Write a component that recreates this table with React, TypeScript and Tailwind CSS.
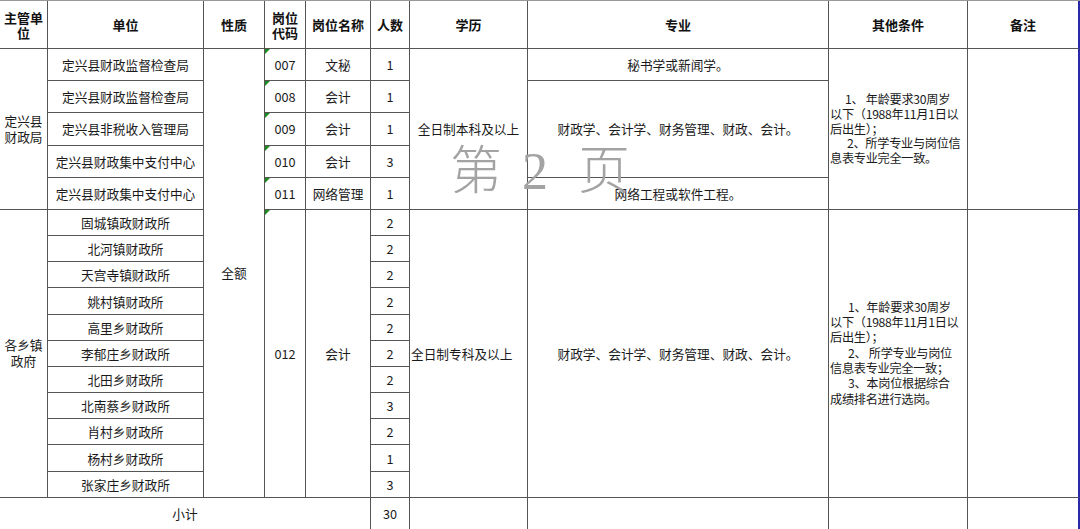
import React from "react";

interface UnitRow {
  unit: string;
  code?: string;
  name?: string;
  num: string;
}

const sectionA: UnitRow[] = [
  { unit: "定兴县财政监督检查局", code: "007", name: "文秘", num: "1" },
  { unit: "定兴县财政监督检查局", code: "008", name: "会计", num: "1" },
  { unit: "定兴县非税收入管理局", code: "009", name: "会计", num: "1" },
  { unit: "定兴县财政集中支付中心", code: "010", name: "会计", num: "3" },
  { unit: "定兴县财政集中支付中心", code: "011", name: "网络管理", num: "1" },
];

const sectionB: UnitRow[] = [
  { unit: "固城镇政财政所", num: "2" },
  { unit: "北河镇财政所", num: "2" },
  { unit: "天宫寺镇财政所", num: "2" },
  { unit: "姚村镇财政所", num: "2" },
  { unit: "高里乡财政所", num: "2" },
  { unit: "李郁庄乡财政所", num: "2" },
  { unit: "北田乡财政所", num: "2" },
  { unit: "北南蔡乡财政所", num: "3" },
  { unit: "肖村乡财政所", num: "2" },
  { unit: "杨村乡财政所", num: "1" },
  { unit: "张家庄乡财政所", num: "3" },
];

// row-start-2 .. row-start-17, written out so tailwind picks them up
const rowStart = [
  "row-start-2",
  "row-start-3",
  "row-start-4",
  "row-start-5",
  "row-start-6",
  "row-start-7",
  "row-start-8",
  "row-start-9",
  "row-start-10",
  "row-start-11",
  "row-start-12",
  "row-start-13",
  "row-start-14",
  "row-start-15",
  "row-start-16",
  "row-start-17",
];

const cell =
  "flex items-center justify-center text-center border-r border-b border-[#555] bg-white";

function Tri() {
  return (
    <span className="absolute left-0 top-0 h-0 w-0 border-t-[5px] border-r-[5px] border-t-[#1f8a1f] border-r-transparent" />
  );
}

function Head({ col, children }: { col: string; children: React.ReactNode }) {
  return (
    <div
      className={`${cell} ${col} row-start-1 font-bold text-[13px] leading-[15px] text-[#111]`}
    >
      {children}
    </div>
  );
}

export default function App() {
  return (
    <div className="relative w-[1080px] h-[529px] overflow-hidden bg-white font-['Noto_Sans_CJK_SC','Liberation_Sans',sans-serif] text-[12.7px] text-[#1a1a1a]">
      <div className="grid grid-cols-[48px_156px_61px_41px_65px_39px_118px_301px_139px_112px] grid-rows-[48px_repeat(5,32.2px)_repeat(11,26.18px)_32px] border-t border-[#999]">
        {/* header */}
        <Head col="col-start-1">
          <span>
            主管单
            <br />位
          </span>
        </Head>
        <Head col="col-start-2">单位</Head>
        <Head col="col-start-3">性质</Head>
        <Head col="col-start-4">
          <span>
            岗位
            <br />
            代码
          </span>
        </Head>
        <Head col="col-start-5">岗位名称</Head>
        <Head col="col-start-6">人数</Head>
        <Head col="col-start-7">学历</Head>
        <Head col="col-start-8">专业</Head>
        <Head col="col-start-9">其他条件</Head>
        <div
          className={`${cell} col-start-10 row-start-1 font-bold text-[13px] text-[#111] border-r-2 border-r-[#2a2aa8]`}
        >
          备注
        </div>

        {/* 定兴县财政局 */}
        <div className={`${cell} col-start-1 row-start-2 row-span-5 leading-[16px] px-[3px]`}>
          定兴县财政局
        </div>
        {sectionA.map((r, i) => (
          <React.Fragment key={r.code}>
            <div className={`${cell} col-start-2 ${rowStart[i]}`}>{r.unit}</div>
            <div className={`${cell} col-start-4 ${rowStart[i]} relative`}>
              <Tri />
              {r.code}
            </div>
            <div className={`${cell} col-start-5 ${rowStart[i]}`}>{r.name}</div>
            <div className={`${cell} col-start-6 ${rowStart[i]}`}>{r.num}</div>
          </React.Fragment>
        ))}
        <div className={`${cell} col-start-3 row-start-2 row-span-16`}>全额</div>
        <div className={`${cell} col-start-7 row-start-2 row-span-5`}>全日制本科及以上</div>
        <div className={`${cell} col-start-8 row-start-2`}>秘书学或新闻学。</div>
        <div className={`${cell} col-start-8 row-start-3 row-span-3`}>
          财政学、会计学、财务管理、财政、会计。
        </div>
        <div className={`${cell} col-start-8 row-start-6`}>网络工程或软件工程。</div>
        <div
          className={`${cell} col-start-9 row-start-2 row-span-5 flex-col !items-start !text-left whitespace-nowrap text-[12.2px] tracking-[-0.3px] leading-[14.8px] pl-[1px]`}
        >
          <div className="pl-[15px]">1、 年龄要求30周岁</div>
          <div>以下（1988年11月1日以</div>
          <div>后出生）；</div>
          <div className="pl-[17px]">2、所学专业与岗位信</div>
          <div>息表专业完全一致。</div>
        </div>
        <div className={`${cell} col-start-10 row-start-2 row-span-5 border-r-2 border-r-[#2a2aa8]`} />

        {/* 各乡镇政府 */}
        <div className={`${cell} col-start-1 row-start-7 row-span-11 leading-[16px] px-[3px]`}>
          各乡镇政府
        </div>
        {sectionB.map((r, i) => (
          <React.Fragment key={r.unit}>
            <div className={`${cell} col-start-2 ${rowStart[i + 5]}`}>{r.unit}</div>
            <div className={`${cell} col-start-6 ${rowStart[i + 5]}`}>{r.num}</div>
          </React.Fragment>
        ))}
        <div className={`${cell} col-start-4 row-start-7 row-span-11 relative`}>
          <Tri />
          012
        </div>
        <div className={`${cell} col-start-5 row-start-7 row-span-11`}>会计</div>
        <div className={`${cell} col-start-7 row-start-7 row-span-11 !justify-start pl-[1px]`}>
          全日制专科及以上
        </div>
        <div className={`${cell} col-start-8 row-start-7 row-span-11`}>
          财政学、会计学、财务管理、财政、会计。
        </div>
        <div
          className={`${cell} col-start-9 row-start-7 row-span-11 flex-col !items-start !text-left whitespace-nowrap text-[12.2px] tracking-[-0.3px] leading-[15.3px] pl-[1px]`}
        >
          <div className="pl-[18px]">1、年龄要求30周岁</div>
          <div>以下（1988年11月1日以</div>
          <div>后出生）；</div>
          <div className="pl-[18px]">2、 所学专业与岗位</div>
          <div>信息表专业完全一致；</div>
          <div className="pl-[18px]">3、本岗位根据综合</div>
          <div>成绩排名进行选岗。</div>
        </div>
        <div className={`${cell} col-start-10 row-start-7 row-span-11 border-r-2 border-r-[#2a2aa8]`} />

        {/* 小计 */}
        <div className={`${cell} col-start-1 col-span-5 row-start-18`}>小计</div>
        <div className={`${cell} col-start-6 row-start-18`}>30</div>
        <div className={`${cell} col-start-7 row-start-18`} />
        <div className={`${cell} col-start-8 row-start-18`} />
        <div className={`${cell} col-start-9 row-start-18`} />
        <div className={`${cell} col-start-10 row-start-18 border-r-2 border-r-[#2a2aa8]`} />
      </div>

      {/* page watermark */}
      <div className="pointer-events-none absolute left-[450px] top-[141px] flex items-baseline text-[52px] leading-none font-light text-[#a3a3a3]">
        <span>第</span>
        <span className="ml-[20px] font-['Liberation_Serif',serif]">2</span>
        <span className="ml-[30px]">页</span>
      </div>
    </div>
  );
}
